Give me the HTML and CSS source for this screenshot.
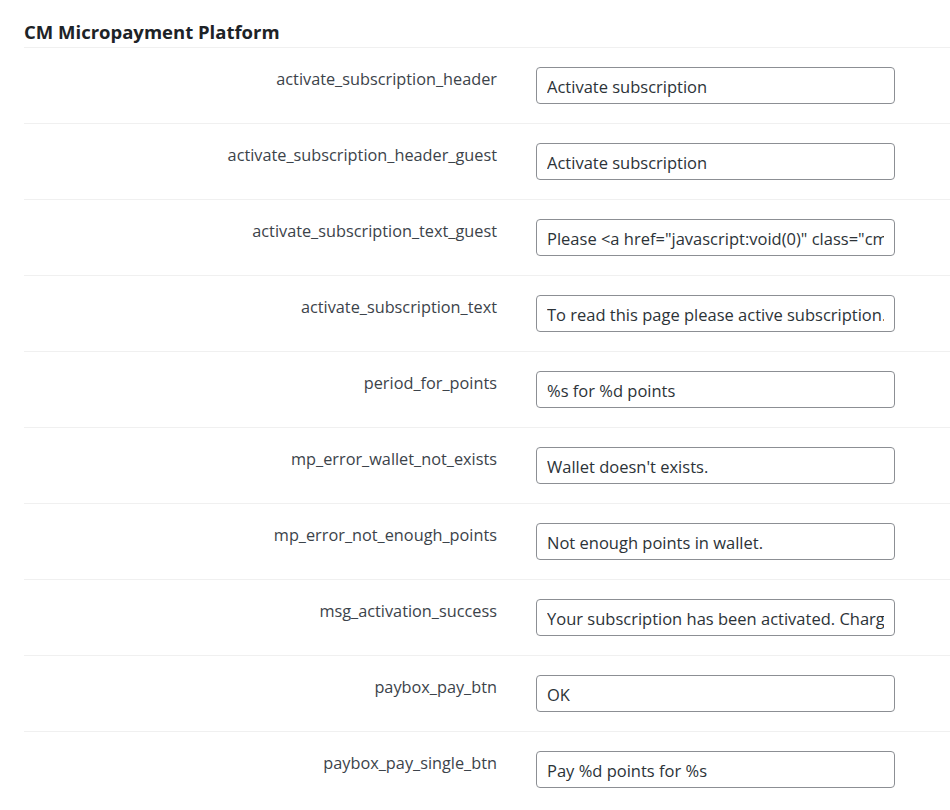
FILE: index.html
```html
<!DOCTYPE html>
<html lang="en">
<head>
    <meta charset="UTF-8">
    <meta name="viewport" content="width=device-width, initial-scale=1.0">
    <title>CM Micropayment Platform</title>
    <link rel="stylesheet" href="styles.css">
</head>
<body>

    <div class="wrap">
        <h2 class="section-title">CM Micropayment Platform</h2>

        <div class="form-table">
            <div class="row">
                <label class="label" for="f1">activate_subscription_header</label>
                <input class="field" type="text" id="f1" value="Activate subscription">
            </div>
            <div class="row">
                <label class="label" for="f2">activate_subscription_header_guest</label>
                <input class="field" type="text" id="f2" value="Activate subscription">
            </div>
            <div class="row">
                <label class="label" for="f3">activate_subscription_text_guest</label>
                <input class="field" type="text" id="f3" value='Please &lt;a href="javascript:void(0)" class="cmmp-login-link"&gt;login&lt;/a&gt; to activate subscription.'>
            </div>
            <div class="row">
                <label class="label" for="f4">activate_subscription_text</label>
                <input class="field" type="text" id="f4" value="To read this page please active subscription.">
            </div>
            <div class="row">
                <label class="label" for="f5">period_for_points</label>
                <input class="field" type="text" id="f5" value="%s for %d points">
            </div>
            <div class="row">
                <label class="label" for="f6">mp_error_wallet_not_exists</label>
                <input class="field" type="text" id="f6" value="Wallet doesn't exists.">
            </div>
            <div class="row">
                <label class="label" for="f7">mp_error_not_enough_points</label>
                <input class="field" type="text" id="f7" value="Not enough points in wallet.">
            </div>
            <div class="row">
                <label class="label" for="f8">msg_activation_success</label>
                <input class="field" type="text" id="f8" value="Your subscription has been activated. Charged %d points.">
            </div>
            <div class="row">
                <label class="label" for="f9">paybox_pay_btn</label>
                <input class="field" type="text" id="f9" value="OK">
            </div>
            <div class="row">
                <label class="label" for="f10">paybox_pay_single_btn</label>
                <input class="field" type="text" id="f10" value="Pay %d points for %s">
            </div>
        </div>
    </div>

</body>
</html>
```

FILE: styles.css
```css
body { margin: 0; background-color: #ffffff; font-family: "Open Sans", "Noto Sans", sans-serif; color: #3c434a; overflow: hidden; }
.wrap { padding: 0 0 0 24px; }
.section-title { margin: 0; padding-top: 21px; height: 26px; font-size: 18.5px; font-weight: 700; line-height: 22px; color: #1d2327; }
.form-table { border-top: 1px solid #f0f0f0; }
.row { display: grid; grid-template-columns: 473px 359px; column-gap: 39px; padding: 19px 0 19px 0; border-bottom: 1px solid #f0f0f0; }
.row:last-child { border-bottom: none; }
.label { text-align: right; font-size: 16.3px; line-height: 22px; padding-top: 1px; }
.field { box-sizing: border-box; width: 359px; height: 37px; margin: 0; padding: 1px 10px 0 10px; border: 1px solid #8c8f94; border-radius: 4px; font-family: "Open Sans", "Noto Sans", sans-serif; font-size: 16.5px; color: #2c3338; background: #fff; }
```
